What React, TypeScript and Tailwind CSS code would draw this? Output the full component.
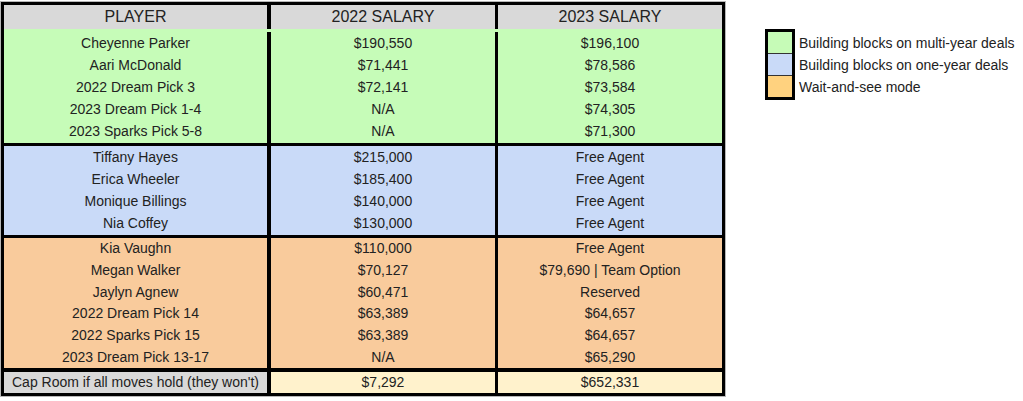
const groups = [
  {
    color: "bg-[#c6fcb8]",
    height: "h-[114px]",
    pad: "pt-[3px]",
    rows: [
      ["Cheyenne Parker", "$190,550", "$196,100"],
      ["Aari McDonald", "$71,441", "$78,586"],
      ["2022 Dream Pick 3", "$72,141", "$73,584"],
      ["2023 Dream Pick 1-4", "N/A", "$74,305"],
      ["2023 Sparks Pick 5-8", "N/A", "$71,300"],
    ],
  },
  {
    color: "bg-[#c9daf8]",
    height: "h-[92px]",
    pad: "",
    rows: [
      ["Tiffany Hayes", "$215,000", "Free Agent"],
      ["Erica Wheeler", "$185,400", "Free Agent"],
      ["Monique Billings", "$140,000", "Free Agent"],
      ["Nia Coffey", "$130,000", "Free Agent"],
    ],
  },
  {
    color: "bg-[#f9cb9c]",
    height: "h-[133px]",
    pad: "",
    rows: [
      ["Kia Vaughn", "$110,000", "Free Agent"],
      ["Megan Walker", "$70,127", "$79,690 | Team Option"],
      ["Jaylyn Agnew", "$60,471", "Reserved"],
      ["2022 Dream Pick 14", "$63,389", "$64,657"],
      ["2022 Sparks Pick 15", "$63,389", "$64,657"],
      ["2023 Dream Pick 13-17", "N/A", "$65,290"],
    ],
  },
];

const legend = [
  { label: "Building blocks on multi-year deals", color: "bg-[#c6fbb7]" },
  { label: "Building blocks on one-year deals", color: "bg-[#c9daf8]" },
  { label: "Wait-and-see mode", color: "bg-[#ffd27f]" },
];

export default function App() {
  return (
    <div
      className="flex items-start bg-white text-[14px] text-[#222]"
      style={{ fontFamily: '"Liberation Sans", Arial, sans-serif' }}
    >
      <div className="mt-[1px] border border-[#b7b7b7]">
        <div className="border-[3px] border-black">
          <Row
            cells={["PLAYER", "2022 SALARY", "2023 SALARY"]}
            className="h-[24px] bg-[#d9d9d9] text-[16px]"
          />
          {groups.map((group, i) => (
            <div
              key={i}
              className={`flex flex-col border-black ${group.height} ${group.color} ${group.pad} ${i > 0 ? "border-t-[3px]" : ""}`}
            >
              {group.rows.map((row) => (
                <Row key={row[0]} cells={row} className="flex-1" />
              ))}
            </div>
          ))}
          <div className="flex h-[25px] border-t-[4px] border-black">
            <div className="flex w-[267px] items-center justify-center border-r-[4px] border-black bg-[#d9d9d9]">
              Cap Room if all moves hold (they won't)
            </div>
            <div className="flex w-[227px] items-center justify-center border-r-[3px] border-black bg-[#fff2cc]">
              $7,292
            </div>
            <div className="flex w-[224px] items-center justify-center bg-[#fff2cc]">
              $652,331
            </div>
          </div>
        </div>
      </div>

      <div className="ml-[39px] mt-[29px] flex">
        <div className="flex w-[30px] flex-col border-[3px] border-black">
          {legend.map((item, i) => (
            <div
              key={item.label}
              className={`${item.color} ${i > 0 ? "h-[22px] border-t border-[#333]" : "h-[21px]"}`}
            />
          ))}
        </div>
        <div className="ml-[4px] flex flex-col pt-[3px]">
          {legend.map((item) => (
            <div key={item.label} className="flex h-[22px] items-center">
              {item.label}
            </div>
          ))}
        </div>
      </div>
    </div>
  );
}

function Row({ cells, className }: { cells: string[]; className?: string }) {
  return (
    <div className={`flex ${className ?? ""}`}>
      <div className="flex w-[267px] items-center justify-center border-r-[4px] border-black">
        {cells[0]}
      </div>
      <div className="flex w-[227px] items-center justify-center border-r-[3px] border-black">
        {cells[1]}
      </div>
      <div className="flex w-[224px] items-center justify-center">
        {cells[2]}
      </div>
    </div>
  );
}
